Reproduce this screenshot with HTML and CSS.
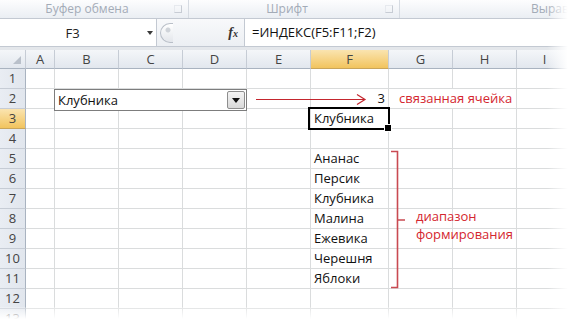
FILE: index.html
```html
<!DOCTYPE html>
<html lang="ru">
<head>
<meta charset="utf-8">
<title>ИНДЕКС</title>
<link rel="stylesheet" href="styles.css">
</head>
<body>
<div class="app">
  <div class="ribbon">
    <div class="group g1"><span class="glabel">Буфер обмена</span><span class="launch"></span></div>
    <div class="group g2"><span class="glabel">Шрифт</span><span class="launch"></span></div>
    <div class="group g3"><span class="glabel">Выравнивание</span></div>
  </div>
  <div class="fbar">
    <div class="namebox"><span class="nbtext">F3</span><span class="nbarrow"></span></div>
    <div class="fmid"><span class="grip"></span><span class="fx">f<span class="fxs">x</span></span></div>
    <div class="finput">=ИНДЕКС(F5:F11;F2)</div>
  </div>
  <div class="gap"></div>
  <div class="sheet">
    <div class="hrow">
      <div class="corner"><span class="tri"></span></div><div>A</div><div>B</div><div>C</div><div>D</div><div>E</div><div class="hsel">F</div><div>G</div><div>H</div><div>I</div>
    </div>
    <div class="row"><div class="rh">1</div><div></div><div></div><div></div><div></div><div></div><div></div><div></div><div></div><div></div></div>
    <div class="row"><div class="rh">2</div><div></div><div></div><div></div><div></div><div></div><div class="num">3</div><div class="link">связанная ячейка</div><div></div></div>
    <div class="row"><div class="rh rsel">3</div><div></div><div></div><div></div><div></div><div></div><div class="cell sel">Клубника</div><div></div><div></div><div></div></div>
    <div class="row"><div class="rh">4</div><div></div><div></div><div></div><div></div><div></div><div></div><div></div><div></div><div></div></div>
    <div class="row"><div class="rh">5</div><div></div><div></div><div></div><div></div><div></div><div class="cell">Ананас</div><div></div><div></div><div></div></div>
    <div class="row"><div class="rh">6</div><div></div><div></div><div></div><div></div><div></div><div class="cell">Персик</div><div></div><div></div><div></div></div>
    <div class="row"><div class="rh">7</div><div></div><div></div><div></div><div></div><div></div><div class="cell">Клубника</div><div></div><div></div><div></div></div>
    <div class="row"><div class="rh">8</div><div></div><div></div><div></div><div></div><div></div><div class="cell">Малина</div><div></div><div></div><div></div></div>
    <div class="row"><div class="rh">9</div><div></div><div></div><div></div><div></div><div></div><div class="cell">Ежевика</div><div></div><div></div><div></div></div>
    <div class="row"><div class="rh">10</div><div></div><div></div><div></div><div></div><div></div><div class="cell">Черешня</div><div></div><div></div><div></div></div>
    <div class="row"><div class="rh">11</div><div></div><div></div><div></div><div></div><div></div><div class="cell">Яблоки</div><div></div><div></div><div></div></div>
    <div class="row"><div class="rh">12</div><div></div><div></div><div></div><div></div><div></div><div></div><div></div><div></div><div></div></div>
    <div class="row"><div class="rh">13</div><div></div><div></div><div></div><div></div><div></div><div></div><div></div><div></div><div></div></div>

    <div class="combo"><span class="combotext">Клубника</span><span class="combobtn"><span class="combotri"></span></span></div>
    <svg class="arrow" width="114" height="12" viewBox="0 0 114 12"><path d="M2 6.5H111M103 1.5L111 6.5L103 11.5" fill="none" stroke="#c4262e" stroke-width="1.2"/></svg>
    <svg class="bracket" width="20" height="142" viewBox="0 0 20 142"><path d="M3 2.5H9.5V138.5H3M9.5 71H17" fill="none" stroke="#c94a52" stroke-width="1.6"/></svg>
    <div class="note">диапазон<br>формирования</div>
  </div>
  <div class="fade-right"></div>
  <div class="fade-bottom"></div>
</div>
</body>
</html>
```
FILE: styles.css
```css
* { box-sizing: border-box; }
body { margin: 0; background: #fff; font-family: "Open Sans", "Noto Sans", sans-serif; }
.app { position: relative; width: 573px; height: 327px; overflow: hidden; background: #fff; }

.ribbon { display: flex; height: 18px; background: linear-gradient(#fdfdfe, #eaeef3); }
.group { display: flex; align-items: center; height: 18px; border-right: 1px solid #d6dbe2; white-space: nowrap; overflow: hidden; }
.g1 { width: 189px; }
.g2 { width: 211px; }
.g3 { flex: 1; border-right: none; }
.glabel { flex: 1; text-align: center; font-size: 12px; line-height: 16px; color: #a3abb7; }
.g3 .glabel { flex: none; text-align: left; padding-left: 131px; }
.launch { width: 8px; height: 8px; border: 1px solid #c7ccd4; border-top-color: #e6e9ee; border-left-color: #e6e9ee; margin-right: 6px; }

.fbar { display: flex; height: 29px; border-top: 1px solid #c3c9d2; border-bottom: 1px solid #c3c9d2; }
.namebox { width: 157px; display: flex; align-items: center; background: #fff; border-right: 1px solid #c3c9d2; }
.nbtext { width: 145px; text-align: center; font-size: 13px; color: #222; }
.nbarrow { width: 0; height: 0; margin-left: 2px; border-left: 3.5px solid transparent; border-right: 3.5px solid transparent; border-top: 4px solid #3a3a3a; }
.fmid { width: 87px; display: flex; align-items: center; background: linear-gradient(#f8f9fb, #eceff3); }
.grip { width: 13px; height: 20px; margin-left: 3px; border: 1px solid #b9bfc8; border-right: none; border-radius: 11px 0 0 11px; background: radial-gradient(circle at 7px 6px, #cfd3d9 0 2px, transparent 3px), linear-gradient(#ffffff, #e3e6eb); }
.fx { margin-left: auto; margin-right: 6px; font-family: "Liberation Serif", serif; font-style: italic; font-weight: bold; font-size: 14px; color: #333; }
.fxs { font-size: 10px; }
.finput { flex: 1; background: #fff; border-left: 1px solid #c3c9d2; padding-left: 7px; font-size: 13px; line-height: 27px; color: #111; }
.gap { height: 3px; background: #e4e7eb; }

.sheet { position: relative; }
.hrow, .row { display: grid; grid-template-columns: 26px 29px 64px 64px 64px 64px 78px 64px 64px 1fr; }
.hrow { height: 19px; }
.hrow > div { background: linear-gradient(#f4f6f9, #e2e7ee); border-right: 1px solid #c6ccd5; border-bottom: 1px solid #a9b3c0; text-align: center; font-size: 13px; line-height: 18px; color: #444; }
.hrow > .hsel { background: linear-gradient(#fae4b0, #f2c45e); border-bottom-color: #c9a55a; }
.corner { position: relative; }
.tri { position: absolute; right: 4px; bottom: 4px; width: 8px; height: 8px; background: #b9c0ca; clip-path: polygon(100% 0, 100% 100%, 0 100%); }

.row { height: 20px; }
.row > div { border-right: 1px solid #dadcdd; border-bottom: 1px solid #dadcdd; font-size: 13px; line-height: 18px; color: #111; white-space: nowrap; }
.row > .rh { background: linear-gradient(90deg, #e9edf3, #e1e6ed); border-right: 1px solid #a9b3c0; border-bottom: 1px solid #c6ccd5; text-align: center; color: #444; }
.row > .rsel { background: linear-gradient(#fae4b0, #f2c45e); border-bottom-color: #c9a55a; }
.cell { padding-left: 3px; }
.num { text-align: right; padding-right: 3px; }
.row > .link { grid-column: span 2; padding-left: 10px; color: #d4262f; }
.sel { position: relative; }
.sel::before { content: ""; position: absolute; left: -3px; top: -2px; right: -2px; bottom: -2px; border: 2px solid #000; }
.sel::after { content: ""; position: absolute; right: -4px; bottom: -4px; width: 6px; height: 6px; background: #000; border: 1px solid #fff; }

.combo { position: absolute; left: 54px; top: 39px; width: 193px; height: 22px; display: flex; align-items: center; background: #fff; border: 1px solid #7d7d7d; }
.combotext { flex: 1; padding-left: 3px; font-size: 13px; color: #111; }
.combobtn { width: 18px; height: 18px; margin-right: 1px; display: flex; align-items: center; justify-content: center; border: 1px solid #8e8e8e; border-radius: 2px; background: linear-gradient(#f4f4f4, #d9d9d9); }
.combotri { width: 0; height: 0; border-left: 4px solid transparent; border-right: 4px solid transparent; border-top: 5px solid #111; }

.arrow { position: absolute; left: 254px; top: 43px; }
.bracket { position: absolute; left: 388px; top: 99px; }
.note { position: absolute; left: 416px; top: 157px; font-size: 13px; line-height: 18px; color: #d4262f; }

.fade-right { position: absolute; right: 0; top: 0; width: 26px; height: 327px; background: linear-gradient(90deg, rgba(255,255,255,0), #fff 80%); }
.fade-bottom { position: absolute; left: 0; bottom: 0; width: 573px; height: 20px; background: linear-gradient(rgba(255,255,255,0.2), #fff 60%); }
```
